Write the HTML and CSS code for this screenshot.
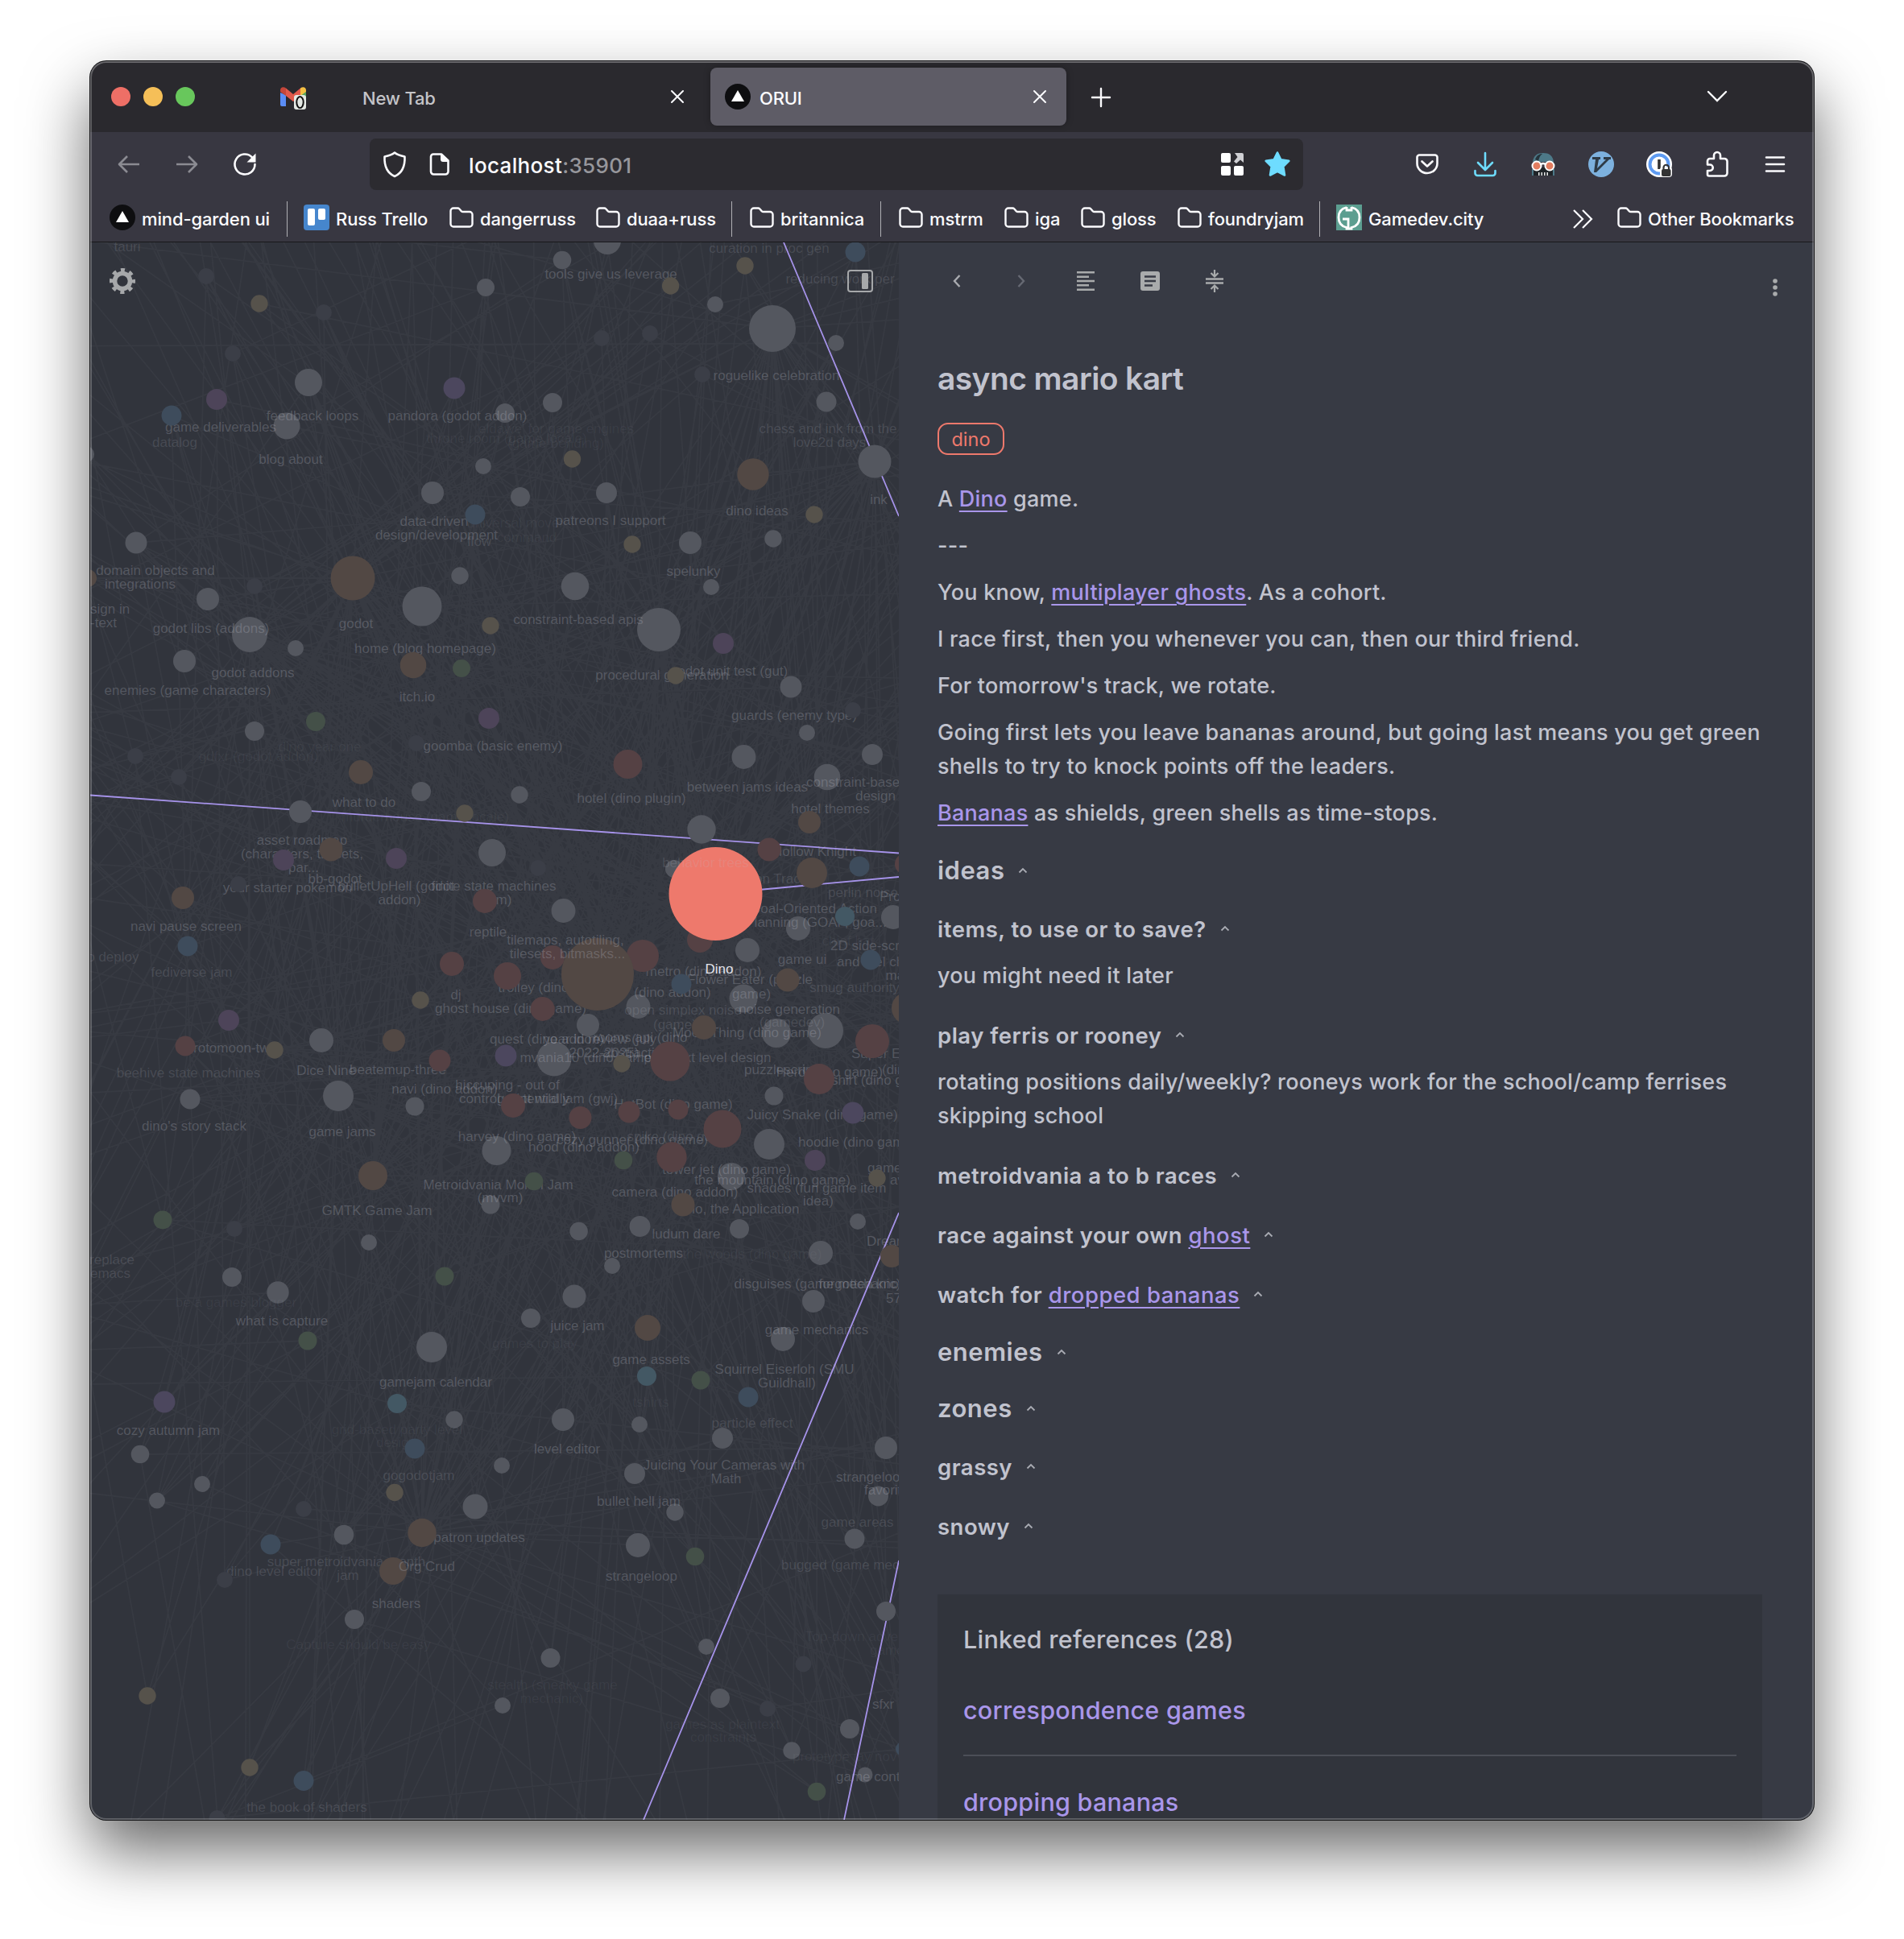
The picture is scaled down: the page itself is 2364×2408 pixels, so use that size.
FILE: index.html
```html
<!DOCTYPE html>
<html lang="en">
<head>
<meta charset="utf-8">
<title>ORUI</title>
<link rel="stylesheet" href="styles.css">
</head>
<body>
<svg class="defs" width="0" height="0" aria-hidden="true">
  <symbol id="folder" viewBox="0 0 30 26"><path d="M1.5 21V5a3.5 3.5 0 0 1 3.5-3.5h5.2a3 3 0 0 1 2.2 1l2.3 2.6a3 3 0 0 0 2.2.9H25a3.500 3.500 0 0 1 3.500 3.500V21a3.500 3.500 0 0 1-3.500 3.500H5A3.500 3.500 0 0 1 1.500 21z" fill="none" stroke="#fbfbfe" stroke-width="2.400"/></symbol>
  <symbol id="orui" viewBox="0 0 32 32"><circle cx="16" cy="16" r="16" fill="#0e0e10"/><path d="M16 8l8 14H8z" fill="#fff"/></symbol>
  <symbol id="close" viewBox="0 0 18 18"><path d="M2 2l14 14M16 2L2 16" stroke="#fbfbfe" stroke-width="2" stroke-linecap="round"/></symbol>
  <symbol id="caret" viewBox="0 0 12 8"><path d="M1.500 6.500L6 2l4.500 4.500" fill="none" stroke="#a9abb3" stroke-width="1.800"/></symbol>
</svg>
<main class="window">
  <header class="tabs">
    <div class="lights"><i class="red"></i><i class="amber"></i><i class="green"></i></div>
    <svg class="gmail" width="34" height="30" viewBox="0 0 34 30"><path d="M0 7v15a2 2 0 0 0 2 2h5V10z" fill="#5b8df6"/><path d="M25 9v6h7V6z" fill="#58a55c"/><path d="M0 4C0 0 4-1 7 1.500v9.500L0 6z" fill="#c5463a"/><path d="M7 1.500l9 7.500 9-7.500V11l-9 7-9-7z" fill="#e0594b"/><path d="M25 1.500C28-1 32 0 32 4v2l-7 5z" fill="#f3bf43"/><rect x="17" y="10" width="15" height="18" rx="3" fill="#e4e8e4"/><ellipse cx="24.500" cy="19" rx="4.200" ry="7" fill="none" stroke="#111" stroke-width="2"/></svg>
    <div class="tab"><span>New Tab</span><svg width="18" height="18"><use href="#close"/></svg></div>
    <div class="tab active"><svg width="32" height="32"><use href="#orui"/></svg><span>ORUI</span><svg width="18" height="18"><use href="#close"/></svg></div>
    <svg class="plus" width="26" height="26" viewBox="0 0 26 26"><path d="M13 2v22M2 13h22" stroke="#fbfbfe" stroke-width="2.400" stroke-linecap="round"/></svg>
    <svg class="alltabs" width="26" height="16" viewBox="0 0 26 16"><path d="M2 2l11 11L24 2" fill="none" stroke="#fbfbfe" stroke-width="2.400" stroke-linecap="round"/></svg>
  </header>

  <nav class="nav">
    <span class="slot muted"><svg width="30" height="26" viewBox="0 0 30 26"><path d="M28 13H3M13 3L3 13l10 10" /></svg></span>
    <span class="slot muted"><svg width="30" height="26" viewBox="0 0 30 26"><path d="M2 13h25M17 3l10 10-10 10"/></svg></span>
    <span class="slot"><svg width="32" height="32" viewBox="0 0 32 32"><path d="M28.500 16A12.500 12.500 0 1 1 25 7.300"/><path d="M29.500 2.500v11h-11z" fill="#fbfbfe" stroke="none"/></svg></span>
    <div class="url">
      <span class="uslot"><svg width="30" height="34" viewBox="0 0 30 34"><path d="M15 2.500c3 2.500 7.500 4 12.500 5C28 19 24 28 15 32 6 28 2 19 2.500 7.500c5-1 9.500-2.500 12.500-5z"/></svg></span>
      <span class="uslot"><svg width="26" height="30" viewBox="0 0 26 30"><path d="M5 2.500h10l8.500 8V24A3.500 3.500 0 0 1 20 27.500H5.500A3.500 3.500 0 0 1 2 24V5.500A3 3 0 0 1 5 2.500z"/><path d="M14 2l10 10h-7a3 3 0 0 1-3-3z" fill="#fbfbfe" stroke="none"/></svg></span>
      <span class="addr">localhost<em>:35901</em></span>
      <span class="uslot"><svg width="28" height="28" viewBox="0 0 28 28"><g fill="#fff"><rect width="12" height="12" rx="2"/><rect y="16" width="12" height="12" rx="2"/><rect x="16" y="16" width="12" height="12" rx="2"/></g><path d="M17 0h9a2 2 0 0 1 2 2v10l-4-3.500L19 13l-3-2.500L20.500 5z" fill="#cfcfd3" stroke="none"/></svg></span>
      <span class="uslot"><svg width="32" height="32" viewBox="0 0 32 32"><path d="M16 1.500l4.300 8.800 10 1.500-7 7L25 29.500l-9-4.600-9 4.600 1.700-10.700-7-7 10-1.500z" fill="#6edcff" stroke="#6edcff" stroke-linejoin="round"/></svg></span>
    </div>
    <span class="slot push"><svg width="30" height="28" viewBox="0 0 30 28"><path d="M5 2.500h20A3 3 0 0 1 27.500 5v8a12.500 12 0 0 1-25 0V5A3 3 0 0 1 5 2.500z"/><path d="M8.500 10.500l6.500 6 6.500-6"/></svg></span>
    <span class="slot"><svg class="cyan" width="30" height="32" viewBox="0 0 30 32"><path d="M15 2v20M6 14l9 9 9-9M2.500 24v3a3 3 0 0 0 3 3h19a3 3 0 0 0 3-3v-3"/></svg></span>
    <span class="slot"><svg width="32" height="32" viewBox="0 0 32 32"><path d="M3 13C4 5 9 2 16 2s12 3 13 11z" fill="#4d7988" stroke="none"/><path d="M6 10c2-5 5-7 9-7-3 2-4 5-5 9z" fill="#26343c" stroke="none"/><path d="M4 20h24v10H4z" fill="#1f2428" stroke="none"/><path d="M3 22v8M29 22v8" stroke="#4d7988" stroke-width="2" stroke-linecap="butt"/><path d="M10 28h12" stroke="#e8e8e8" stroke-width="4" stroke-linecap="butt" stroke-dasharray="1.500 2"/><circle cx="8" cy="18" r="5.500" fill="#e27d60" stroke="#fff" stroke-width="2"/><circle cx="24" cy="18" r="5.500" fill="#e27d60" stroke="#fff" stroke-width="2"/><path d="M13 16q3-2 6 0" stroke="#fff"/></svg></span>
    <span class="slot"><svg width="32" height="32" viewBox="0 0 32 32"><circle cx="16" cy="16" r="16" fill="#7db1de" stroke="none"/><path d="M5 7h10v3h-2l-2 11 11-11h-3V7h9v3h-2L10 26H7L9 10H5z" fill="#2e3b47" stroke="none"/></svg></span>
    <span class="slot"><svg width="32" height="32" viewBox="0 0 32 32"><circle cx="16" cy="16" r="16" fill="#fff" stroke="none"/><circle class="ring" cx="16" cy="16" r="11.500" fill="#fff"/><path d="M14.200 10h3.600v12h-3.600z" fill="#333" stroke="none"/><rect x="17" y="19" width="15" height="13" rx="4" fill="#fff"/><rect x="19" y="22" width="11.500" height="9" rx="2" fill="#333"/><path class="shackle" d="M21.500 22v-2a3.200 3.200 0 0 1 6.500 0v2"/></svg></span>
    <span class="slot"><svg width="30" height="34" viewBox="0 0 30 34"><path d="M11 10V6a4 4 0 0 1 8 0v4h5a3.500 3.500 0 0 1 3.500 3.500V28A3.500 3.500 0 0 1 24 31.500H5A2 2 0 0 1 3 29.500V25h3a3.700 3.700 0 0 0 0-7.500H3V13a3 3 0 0 1 3-3z"/></svg></span>
    <span class="slot"><svg width="26" height="22" viewBox="0 0 26 22"><path d="M2 2.500h22M2 11h22M2 19.500h22"/></svg></span>
  </nav>

  <div class="bookmarks">
    <span class="bm"><svg width="32" height="32"><use href="#orui"/></svg>mind-garden ui</span>
    <i class="sep"></i>
    <span class="bm"><svg width="32" height="32" viewBox="0 0 32 32"><rect width="32" height="32" rx="4" fill="#4686cd"/><rect x="5" y="5" width="9" height="21" rx="2" fill="#fff"/><rect x="18" y="5" width="9" height="14" rx="2" fill="#fff"/></svg>Russ Trello</span>
    <span class="bm"><svg width="30" height="26"><use href="#folder"/></svg>dangerruss</span>
    <span class="bm"><svg width="30" height="26"><use href="#folder"/></svg>duaa+russ</span>
    <i class="sep"></i>
    <span class="bm"><svg width="30" height="26"><use href="#folder"/></svg>britannica</span>
    <i class="sep"></i>
    <span class="bm"><svg width="30" height="26"><use href="#folder"/></svg>mstrm</span>
    <span class="bm"><svg width="30" height="26"><use href="#folder"/></svg>iga</span>
    <span class="bm"><svg width="30" height="26"><use href="#folder"/></svg>gloss</span>
    <span class="bm"><svg width="30" height="26"><use href="#folder"/></svg>foundryjam</span>
    <i class="sep"></i>
    <span class="bm"><svg width="32" height="32" viewBox="0 0 32 32"><rect width="32" height="32" fill="#5c9e90"/><path d="M13 3.500C6 5 3 10 3 16s3 11 10 12.500V30h6v-1.500C26 27 29 22 29 16S26 5 19 3.500M13 3v4h6V3M8 18h7v11" fill="none" stroke="#fff" stroke-width="2.800"/></svg>Gamedev.city</span>
    <svg class="more" width="28" height="26" viewBox="0 0 28 26"><path d="M3 2l11 11L3 24M14 2l11 11-11 11" fill="none" stroke="#fbfbfe" stroke-width="2.200"/></svg>
    <span class="bm"><svg width="30" height="26"><use href="#folder"/></svg>Other Bookmarks</span>
  </div>

  <div class="content">
    <section class="graph">
      <svg id="graph" width="1004" height="1959" viewBox="112 301 1004 1959"></svg>
      <svg class="gear" width="32" height="32" viewBox="0 0 32 32" fill="none" stroke="#a6a8aa"><circle cx="16" cy="16" r="9.500" stroke-width="5.600"/><circle cx="16" cy="16" r="13.500" stroke-width="5" stroke-dasharray="5 5.603" stroke-dashoffset="2.500"/></svg>
      <svg class="dock" width="32" height="28" viewBox="0 0 32 28"><rect x="1" y="1" width="30" height="26" rx="3" fill="none" stroke="#a6a8aa" stroke-width="2"/><rect x="18" y="4" width="8" height="20" rx="1.500" fill="#a6a8aa"/></svg>
    </section>

    <article class="note">
      <div class="tools">
        <span class="tool"><svg width="14" height="18" viewBox="0 0 14 18"><path d="M10.500 2l-6.500 7 6.500 7" fill="none" stroke="#a9abb0" stroke-width="2.400"/></svg></span>
        <span class="tool"><svg width="14" height="18" viewBox="0 0 14 18"><path d="M3.500 2l6.500 7-6.500 7" fill="none" stroke="#666973" stroke-width="2.400"/></svg></span>
        <span class="tool"><svg width="22" height="24" viewBox="0 0 22 24"><path d="M0 1.300h22M0 6.700h15M0 12h22M0 17.300h15M0 22.700h22" stroke="#a9abac" stroke-width="2.600"/></svg></span>
        <span class="tool"><svg width="24" height="24" viewBox="0 0 24 24"><rect width="24" height="24" rx="3" fill="#a9abac"/><path d="M5 6.500h14M5 12h14M5 17.500h10" stroke="#373a44" stroke-width="2.600"/></svg></span>
        <span class="tool"><svg width="22" height="28" viewBox="0 0 22 28"><path d="M0 11.500h22M0 16.500h22" stroke="#a9abac" stroke-width="2.600"/><path d="M11 0v7M6.500 4L11 8.500 15.500 4M11 28v-7M6.500 24l4.500-4.500 4.500 4.500" fill="none" stroke="#a9abac" stroke-width="2.200"/></svg></span>
        <svg class="dots" width="6" height="22" viewBox="0 0 6 22" fill="#a9abac"><circle cx="3" cy="3" r="2.800"/><circle cx="3" cy="11" r="2.800"/><circle cx="3" cy="19" r="2.800"/></svg>
      </div>
      <div class="body">
        <h1>async mario kart</h1>
        <span class="tag">dino</span>
        <p class="first">A <a>Dino</a> game.</p>
        <p>---</p>
        <p>You know, <a>multiplayer ghosts</a>. As a cohort.</p>
        <p>I race first, then you whenever you can, then our third friend.</p>
        <p>For tomorrow's track, we rotate.</p>
        <p>Going first lets you leave bananas around, but going last means you get green<br>shells to try to knock points off the leaders.</p>
        <p><a>Bananas</a> as shields, green shells as time-stops.</p>
        <h2>ideas<svg width="12" height="8"><use href="#caret"/></svg></h2>
        <h3 class="near">items, to use or to save?<svg width="12" height="8"><use href="#caret"/></svg></h3>
        <p>you might need it later</p>
        <h3>play ferris or rooney<svg width="12" height="8"><use href="#caret"/></svg></h3>
        <p>rotating positions daily/weekly? rooneys work for the school/camp ferrises<br>skipping school</p>
        <h3>metroidvania a to b races<svg width="12" height="8"><use href="#caret"/></svg></h3>
        <h3>race against your own <a>ghost</a><svg width="12" height="8"><use href="#caret"/></svg></h3>
        <h3>watch for <a>dropped bananas</a><svg width="12" height="8"><use href="#caret"/></svg></h3>
        <h2>enemies<svg width="12" height="8"><use href="#caret"/></svg></h2>
        <h2 class="tight">zones<svg width="12" height="8"><use href="#caret"/></svg></h2>
        <h3 class="near">grassy<svg width="12" height="8"><use href="#caret"/></svg></h3>
        <h3>snowy<svg width="12" height="8"><use href="#caret"/></svg></h3>
        <aside class="refs">
          <div class="reftitle">Linked references (28)</div>
          <div class="ref">correspondence games</div>
          <hr>
          <div class="ref">dropping bananas</div>
        </aside>
      </div>
    </article>
  </div>
</main>
<script src="graph.js"></script>
</body>
</html>
```
FILE: styles.css
```css
* { box-sizing: border-box; }
body { margin: 0; width: 2364px; height: 2408px; background: #fff; overflow: hidden; font-family: Inter, "Liberation Sans", sans-serif; color: #fbfbfe; }
.defs { display: block; }
svg { flex: none; }
.window { position: relative; display: flex; flex-direction: column; width: 2140px; height: 2184px; margin: 76px 0 0 112px; border-radius: 20px; overflow: hidden; background: #373a44; box-shadow: 0 0 0 1px #141416, 0 38px 80px rgba(0,0,0,.6); }
.window::after { content: ""; position: absolute; inset: 0; border-radius: 20px; box-shadow: inset 0 0 0 2px rgba(255,255,255,.22), inset 0 1px 0 1px rgba(255,255,255,.1); pointer-events: none; }

.tabs { display: flex; align-items: center; flex: none; height: 88px; padding-left: 26px; background: #2a292e; font-size: 22px; font-weight: 450; }
.lights { display: flex; gap: 16px; }
.lights i { width: 24px; height: 24px; border-radius: 50%; }
.red { background: #ee6f66; }
.amber { background: #f5bf58; }
.green { background: #68c75c; }
.gmail { margin: 6px 0 0 106px; }
.tab { display: flex; align-items: center; justify-content: space-between; width: 442px; height: 72px; padding: 2px 24px 0 10px; color: #c4c4c8; }
.tab:not(.active) { margin-left: 58px; }
.tab:not(.active) span { letter-spacing: -.2px; padding-top: 2px; }
.gmail + .tab { width: 442px; padding-right: 32px; }
.tab.active { border-radius: 8px; background: #5e5c66; color: #fbfbfe; padding: 0 24px 0 18px; box-shadow: 0 0 8px rgba(0,0,0,.3); }
.tab.active span { flex: 1; margin-left: 11px; padding-top: 3px; letter-spacing: -.2px; }
.gmail + .tab svg { margin-top: -2px; }
.plus { margin: 2px 0 0 30px; }
.alltabs { margin-left: auto; margin-right: 107px; }

.nav { display: flex; align-items: center; flex: none; height: 80px; padding: 0 12px; background: #383741; }
.nav svg { fill: none; stroke: #fbfbfe; stroke-width: 2.6; stroke-linecap: round; stroke-linejoin: round; }
.nav svg rect { stroke: none; }
.nav .ring { stroke: #5e9bf2; stroke-width: 4; }
.nav .shackle { stroke: #333; stroke-width: 2.2; }
.slot { display: flex; justify-content: center; width: 72px; }
.nav .muted svg { stroke: #8b8b92; stroke-linecap: butt; }
.nav svg.cyan { stroke: #6edcff; }
.push { margin-left: auto; }
.url { display: flex; align-items: center; width: 1159px; height: 64px; margin-left: 119px; padding: 0 4px 0 3px; border-radius: 8px; background: #2c2b30; }
.uslot { display: flex; justify-content: center; width: 56px; }
.addr { flex: 1; margin-left: 8px; padding-top: 2px; font-size: 26px; font-weight: 450; letter-spacing: .35px; }
.addr em { font-style: normal; color: #97979c; }

.bookmarks { display: grid; grid-template-columns: 220px 21px 181px 182px 168px 23px 162px 23px 131px 95px 120px 176px 21px 1fr 28px 271px; align-items: center; flex: none; height: 57px; padding: 0 0 1px 24px; border-bottom: 1px solid #18181a; background: #383741; font-size: 22px; font-weight: 450; letter-spacing: -.12px; }
.bm { display: flex; align-items: center; gap: 8px; padding-top: 1px; white-space: nowrap; }
.bm svg { margin-top: -4px; }
.sep { width: 1px; height: 44px; background: #b0b0b4; }
.more { justify-self: start; margin-left: -2px; }
.bookmarks .bm:last-child { padding-left: 27px; }

.content { display: flex; flex: 1; min-height: 0; }
.graph { position: relative; width: 1004px; height: 1959px; background: #31343c; }
#graph { display: block; font: 17px "Liberation Sans", Arial, sans-serif; }
.gear { position: absolute; left: 24px; top: 32px; }
.dock { position: absolute; left: 940px; top: 34px; }
.edges { fill: none; stroke: #373a42; stroke-width: 1.8; }
.links { fill: none; stroke: #a693ea; stroke-width: 1.8; }
.n-g { fill: #54575f; }
.n-f { fill: #3b3e47; }
.n-y { fill: #56524b; }
.n-b { fill: #3e4c5c; }
.n-p { fill: #4c475e; }
.n-m { fill: #4d4459; }
.n-o { fill: #524844; }
.n-r { fill: #554144; }
.n-v { fill: #445048; }
.n-t { fill: #435864; }
.n-dino { fill: #ee796c; }
.t-n { fill: rgba(192,194,205,.25); }
.t-d { fill: rgba(192,194,205,.17); }
.t-f { fill: rgba(192,194,205,.07); }
.t-w { fill: #e2e2ea; }

.note { flex: 1; background: #373a44; color: #c1c3ce; overflow: hidden; }
.tools { display: flex; align-items: center; height: 96px; padding: 0 45px 0 32px; }
.tool { display: flex; justify-content: center; width: 80px; }
.dots { margin: 16px 0 0 auto; }
.body { padding: 43px 64px 0 48px; }
h1 { margin: 0; font-size: 39px; line-height: 60px; font-weight: 600; letter-spacing: -.6px; }
.tag { display: block; width: 83px; height: 40px; margin-top: 25px; border: 2px solid #ee796c; border-radius: 13px; color: #ee796c; font-size: 23.500px; line-height: 37px; text-align: center; }
p, h2, h3 { margin: 16px 0 0; font-size: 27px; line-height: 42px; white-space: nowrap; }
p { font-weight: 450; letter-spacing: .24px; }
p.first { margin-top: 34px; }
h2, h3 { font-weight: 600; margin-top: 32px; }
h2 { font-size: 31px; margin-top: 29px; letter-spacing: .5px; }
h3 { font-size: 27.5px; letter-spacing: .5px; }
h2.tight { margin-top: 28px; }
h3.near { margin-top: 31px; }
h2 svg, h3 svg { margin: 0 0 7px 17px; }
h3 a { font-weight: 450; }
a { color: #a996ea; text-decoration: underline; text-decoration-thickness: 2px; text-underline-offset: 5px; }
.refs { height: 400px; margin-top: 63px; padding: 32px; background: #31343c; font-size: 30.5px; line-height: 48px; font-weight: 450; letter-spacing: .25px; }
.ref { color: #a996ea; }
.reftitle { margin-bottom: 40px; }
hr { height: 2px; margin: 31px 0 33px; border: 0; background: #4b4e57; }
```
FILE: graph.js
```js
// Each node: kind, centre x, centre y, radius.
const nodes = `
f 256 343 10|y 322 377 10.7|f 402 388 10|g 603 357 11|f 289 439 10|g 383 475 17|m 269 496 13|b 213 516 12.5|g 356 529 16.5|p 564 482 13.5|g 107 564 10|g 600 579 10|g 537 612 14|b 590 639 12.5|g 169 674 13.5|o 109 718 11|o 438 718 27.5|g 258 744 14|f 316 728 10|g 571 715 10.7|g 524 753 24.5|y 609 777 10.7|g 310 788 22
g 754 299 17|g 698 323 11.3|y 832.6 355 10.7|y 925 330 10.7|b 1062 313 12.5|g 888 378 10|g 959 408 29|f 747 420 10|f 807 414 10|g 1038 426 10|f 872 465 10|g 1026 499 12.5|g 1086 573 20.5|g 686 500 12|g 627 513 12|y 710.5 570 10.7|o 935 589 19.7|y 1011 639 10.7|g 960 669 10.7|g 646 617 12|g 753 612 13|y 785 676 10.7|g 857 674 14|g 883 729 10|g 714 728 17.3|g 818 782 27|m 898 799 13
g 229 821 14|g 367 805 10|o 513 826 16.3|v 573 830 11|v 392 896 12|g 316 908 12|m 607 892 13|f 517 923 10|f 168 939 10|f 222 965 10|o 448 959 15|g 523 983 12|g 373 1008 14|y 577 1010 10.7|o 411 1055 14.5|m 352 1068 13|m 492 1066 13|g 611 1059 17|f 296 1098 10|o 227 1115 14|r 602 1119 15|b 233 1175 12.5|r 561 1197 15|y 522 1242 10.7|m 284 1267 13
y 839 839 10.7|g 982 853 13.5|f 1059 882 10|g 1002 910 10|g 1083 937 13|g 923.5 940 15|g 1027 965 16.3|r 779.5 949 18|g 645 987 10.7|o 1005 1021 14|g 871 1030 17.7|r 955 1055 14.5|b 1067 1076 12.5|r 1124 1073 13|o 1008 1084 19|g 837 1079 11|f 668 1078 10|g 699.5 1131 15|g 991 1153 15|t 1049 1138 12|g 1109 1139 15
r 630 1212 17|r 686 1189 15|r 798 1187 20|o 742 1210 45|r 869 1167 16|g 928 1180 15|b 1081 1192 12.5|o 978 1217 14.5|b 846 1222 12.5|g 923 1240 17.5|g 792.5 1250 15|r 673.6 1253 15|g 730 1273 14|o 874 1276 15|g 964 1283 18|g 1025 1280 22|r 1083 1293 21|o 1127 1252 20|g 688 1315 21.5|p 628 1311 13.5|r 546 1317 13.5|y 772 1321 10.7|r 832 1318 24.5|r 1017 1340 19|g 961 1361 11.5|r 637 1373 15|g 515 1374 11.5|r 720.5 1388 14|r 781 1381 13.5|r 842 1378 12.5|p 1059 1382 13.5|r 897 1402 23.5|g 955 1421 19|g 616.5 1429 18|v 774 1441 11.3|r 834 1437 18.7|m 1012 1441 13|g 908 1461 17|v 663 1467 11.3|y 1089 1463 10.7|o 848 1496 14.5|g 609 1496 11.5|g 718.6 1529 11.3|g 794.5 1523 13|g 918 1526 12|g 1065 1517 10
r 230 1299 12.5|y 341 1304 10.7|g 399 1292 15|o 489 1292 14|g 236 1365 12.5|g 420 1361 19|o 463 1460 18|v 202 1515 11.5|f 291 1526 10|g 458 1543 10|g 288 1586 12|g 345 1605 13.7|v 552 1585 11.5|v 382 1665 11.5|g 536 1673 19|p 204 1741 13.5|t 493 1743 12|g 564 1763 10.7
g 1019 1556 15|o 1107 1560 14|g 760 1572 10|g 713 1610 14.5|g 659 1637 12|o 804 1649 16|g 1010 1616 14|g 972 1663 15|t 803 1709 12|v 870 1714 11.5|b 929 1735 12.5|g 699 1763 14|g 794 1769 10|g 897 1786 13|g 1100 1798 14|g 623 1820 10|g 788 1830 13|g 1090.5 1858 12.5|g 838 1878 10.7|g 1061 1911 12.5|g 792 1919 15|v 863 1933 11.3
g 174 1806 11.3|g 251 1843 10|g 195 1863.5 10|b 515 1799 12.5|y 490 1853.5 10.7|g 590 1871 15.5|f 377 1874 10|g 427 1906 12.3|o 524 1903.5 17.7|b 336 1918 12.5|o 488 1951 17|f 279 1962 10|g 440 2011 12|g 683.5 2059 12|y 183 2106 10.7|g 624 2118 10|y 310 2195 10.7|b 377 2211.5 12.5|f 269.5 2258 10|g 877 2045 10|f 997.5 2066.5 10|g 894 2109 12|f 953 2122 10|g 1100 2001 12|g 1055 2147 12|g 983 2174 10.7|g 1074 2204 9.5|v 1014 2225 11.3|b 1121 2172 9`
  .trim().split(/[\n|]/).map(s => { const [k, x, y, r] = s.split(" "); return { k, x: +x, y: +y, r: +r }; });

// Each label: tone, anchor x, baseline, text. Upper-case tones start at x, the rest are centred on it.
const labels = `
d 158 312 tauri|n 388 522 feedback loops|n 274 536 game deliverables|d 217 555 datalog|n 361 576 blog about|n 568 522 pandora (godot addon)|n 539 653 data-driven|n 542 670 design/development|d 595 678 flow|f 640 655 universal mover|f 654 673 command|n 193 714 domain objects and|n 174 731 integrations|N 112 762 sign in|N 112 779 -text|n 262 786 godot libs (addons)|n 442 780 godot|f 629 550 throne room (game locale)|f 689 538 'eldawe' for game engines|f 690 556 (game-bending)
n 758.6 346 tools give us leverage|d 955 314 curation in proc gen|d 1043 352 reducing work per|n 964 472 roguelike celebration|d 1028 538 chess and ink from the|d 1030 555 love2d days|n 1091 626 ink|n 940 640 dino ideas|n 758 652 patreons I support|n 861 715 spelunky|n 718 775 constraint-based apis
n 314 841 godot addons|n 233 863 enemies (game characters)|n 528 811 home (blog homepage)|n 518 871 itch.io|f 397 933 dino year one|f 321 945 gdfxr (godot addon)|n 612 932 goomba (basic enemy)|n 452 1002 what to do|f 528 1020 murderhouse (game locale)|n 375 1049 asset roadmap|n 375 1066 (characters, tilesets,|n 377 1083 par...|n 416 1097 bb-godot|n 357 1108 your starter pokemon|n 492 1106 bulletUpHell (godot|n 496 1123 addon)|n 613 1106 finite state machines|n 616 1123 (fsm)|n 231 1156 navi pause screen|n 606 1163 reptile|d 138 1194 to deploy|d 238 1213 fediverse jam|n 566 1241 dj|n 634 1258 ghost house (dino game)
n 822 844 procedural generation|n 905 839 godot unit test (gut)|n 986 894 guards (enemy type)|n 928 983 between jams ideas|N 1001 977 constraint-based|n 1087 994 design|n 784 997 hotel (dino plugin)|n 1031 1010 hotel themes|n 1011 1063 Hollow Knight|d 962 1097 Moon Tracks|d 1071.6 1114 perlin noise|N 1092 1119 Project|n 1010 1134 Goal-Oriented Action|n 1013 1151 Planning (GOAP, goa...|f 1053 1174 chief hat|N 1031 1180 2D side-scroller
n 873.6 1212 metro (dino addon)|N 618.5 1232 trolley (dino addon)|n 931 1222 Flower Eater (puzzle|n 933 1240 game)|n 835 1238 (dino addon)|n 996 1197 game ui|N 1039 1200 and feel chart|N 1099.5 1217 map|d 1061 1232 smug authority|d 848 1260 open simplex noise|n 980 1259 noise generation|D 811 1278 (game)|D 943 1275 (gamedev)|n 927.5 1288 Moon Thing (dino game)|n 679 1296 quest (dino addon)|n 745 1296 year in review (july|n 795 1294 rooms api (dino|n 750 1313 2022-2025)|n 793 1313 abstraction)|n 730 1319 mvania10 (dino game)|n 878.5 1319 plaintext level design|n 969 1334 puzzlescript|n 1030 1337 Herd (dino game)|N 1095 1334 (dino|N 1057 1314 Super Elevator|N 1032 1347 shirt (dino game)|n 630 1353 hiccuping - out of|N 570 1370 control, potentially|n 692 1370 godot wild jam (gwj)|n 552 1358 navi (dino addon)|n 836 1377 HotBot (dino game)|n 1021 1390 Juicy Snake (dino game)|n 642 1417 harvey (dino game)|n 785 1421 cozy gunner (dino game)|d 846 1417 spike (dino game)|n 725 1430 hood (dino addon)|N 991 1424 hoodie (dino game)|n 902 1458 tower jet (dino game)|n 959 1471 the mountain (dino game)|N 1077 1456 game|N 1105 1471 av|n 1014 1481 shades (fun game item|n 1016 1497 idea)|n 838 1486 camera (dino addon)|n 915 1507 Dino, the Application|n 618.5 1477 Metroidvania Month Jam|n 621 1493 (mvvm)|n 468 1509 GMTK Game Jam|n 852 1538 ludum dare|N 1076 1547 Dream
n 292 1307 rotomoon-two|d 234 1338 beehive state machines|n 405 1335 Dice Nine|n 494 1334 beatemup-three|n 241 1404 dino's story stack|n 425 1411 game jams|d 139 1570 replace|d 137 1587 emacs|f 293 1623 be a games blogger|n 350 1646 what is capture|n 541 1722 gamejam calendar
n 799 1562 postmortems|f 925 1563 in the woods (dino game)|n 1015 1600 disguises (game mechanic)|N 1016.5 1600 forgotten knowledge|N 1100 1618 57|n 717 1652 juice jam|f 664 1674 games to play|n 1014 1657 game mechanics|n 808.6 1694 game assets|n 974 1706 Squirrel Eiserloh (SMU|n 977 1723 Guildhall)|f 808 1747 tshirts|d 934 1773 particle effect|n 704 1805 level editor|n 899 1825 Juicing Your Cameras with|n 901.5 1842 Math|N 1038 1840 strangeloop|N 1073 1856 favorites|n 793 1870 bullet hell jam|d 1064.5 1896 game areas|D 970 1949 bugged (game mechanic)
n 209 1782 cozy autumn jam|f 493 1781 grid-based party level|f 492 1797 design|d 520 1838 gogodotjam|n 595 1915 patron updates|d 430 1945 super metroidvania month|d 432 1962 jam|d 340.5 1957 dino level editor|n 492 1997 shaders|n 796.5 1963 strangeloop|f 445 2048 Capture should be easy|f 686 2098 stealth (sneaky game|f 685 2115 mechanic)|f 897 2147 games as plaintext|f 898 2163 constraints|n 1096.6 2122 sfxr|N 1038 2212 game controller|F 984 2187 prototype jay nov|F 1000 2038 Top-down adventure|F 1080 2055 games|d 381 2250 the book of shaders`
  .trim().split(/[\n|]/).map(s => { const m = s.match(/^(\w) (\S+) (\S+) (.*)$/); return { t: m[1], x: m[2], y: m[3], s: m[4] }; });

const circle = n => `<circle class="n-${n.k}" cx="${n.x}" cy="${n.y}" r="${n.r}"/>`;
const text = l => `<text class="t-${l.t.toLowerCase()}" x="${l.x}" y="${l.y}"${/[A-Z]/.test(l.t) ? "" : ' text-anchor="middle"'}>${l.s}</text>`;

// Seeded generator keeps the background web the same on every load.
let seed = 71;
const rnd = () => (seed = (seed * 16807) % 2147483647) / 2147483647;
const hubs = [[438, 718], [524, 753], [888, 1110], [742, 1210], [818, 782], [959, 408], [310, 788], [832, 1318], [897, 1402], [1025, 1280], [524, 1903], [463, 1460], [420, 1361], [1086, 573], [888, 1110], [742, 1210], [438, 718]];
let web = "";
const line = (a, b) => { web += `M${a[0].toFixed(0)} ${a[1].toFixed(0)}L${b[0].toFixed(0)} ${b[1].toFixed(0)}`; };
const outside = () => {
  const s = rnd();
  if (s < .45) return [1150 + rnd() * 700, 100 + rnd() * 2100];
  if (s < .7) return [-300 + rnd() * 380, 200 + rnd() * 1900];
  return s < .87 ? [100 + rnd() * 1200, 50 + rnd() * 200] : [100 + rnd() * 1300, 2300 + rnd() * 300];
};
nodes.forEach(n => {
  const p = [n.x, n.y];
  line(p, hubs[Math.floor(rnd() * hubs.length)]);
  line(p, outside());
  const o = nodes[Math.floor(rnd() * nodes.length)];
  line(p, [o.x, o.y]);
  if (n.r > 12 && rnd() < .7) line(p, hubs[Math.floor(rnd() * hubs.length)]);
});
hubs.forEach(h => { for (let i = 0; i < 14; i++) line(h, outside()); });

document.getElementById("graph").innerHTML =
  `<path class="edges" d="${web}"/>` +
  `<path class="links" d="M973 301L1116 641M112 987.500L1116 1059.500M888 1110L1116 1089M1116 1506L799 2260M1116 1938L1048 2260"/>` +
  nodes.filter(n => n.k === "g").map(circle).join("") +
  labels.map(text).join("") +
  nodes.filter(n => n.k !== "g").map(circle).join("") +
  circle({ k: "dino", x: 888.5, y: 1110, r: 58 }) +
  [{ t: "n", x: 702, y: 1173, s: "tilemaps, autotiling," }, { t: "n", x: 704.5, y: 1190, s: "tilesets, bitmasks..." }, { t: "n", x: 530, y: 1951, s: "Org Crud" }, { t: "d", x: 876, y: 1077, s: "behavior trees" }, { t: "w", x: 893, y: 1209, s: "Dino" }].map(text).join("");
```
